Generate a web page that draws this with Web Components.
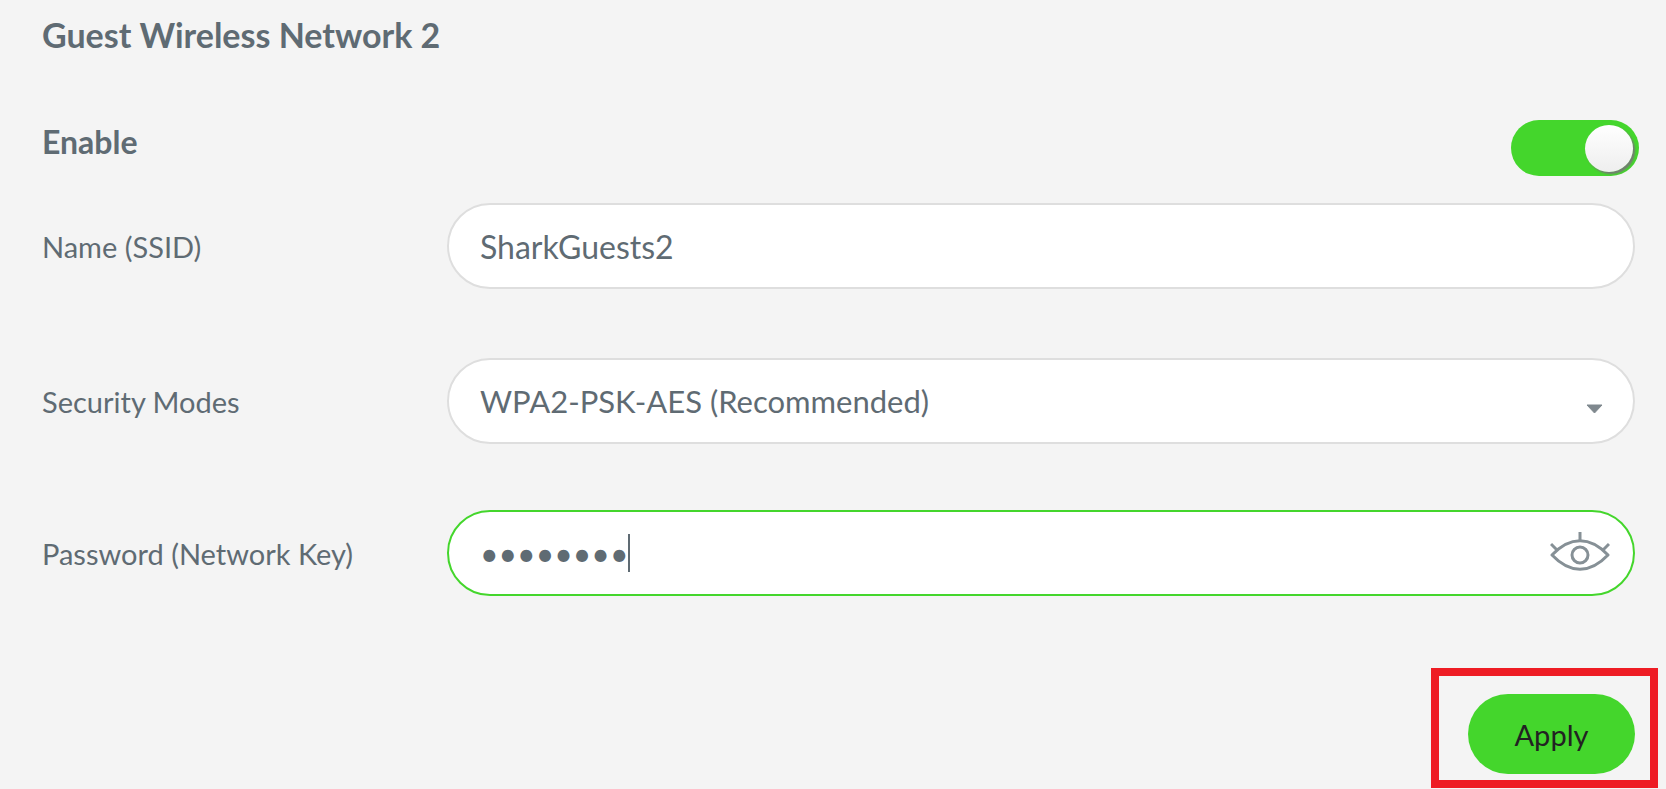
<!DOCTYPE html>
<html lang="en">
<head>
<meta charset="utf-8">
<meta name="viewport" content="width=device-width, initial-scale=1">
<title>Guest Wireless Network 2</title>
<style>
    body {
        margin: 0;
        background: #f4f4f4;
        color: #5f6b73;
        font-family: Lato, "Liberation Sans", sans-serif;
        --accent: #44d62c;
    }
</style>
</head>
<body>
<guest-network heading="Guest Wireless Network 2">
    <toggle-row label="Enable"></toggle-row>
    <text-field label="Name (SSID)" value="SharkGuests2"></text-field>
    <select-field label="Security Modes" value="WPA2-PSK-AES (Recommended)"></select-field>
    <password-field label="Password (Network Key)" value="guest123"></password-field>
    <apply-button slot="action">Apply</apply-button>
</guest-network>

<script>
class GuestNetwork extends HTMLElement {
    constructor() {
        super();
        this._shadowdom = this.attachShadow({ mode: 'open' });
    }

    connectedCallback() {
        this.render();
    }

    render() {
        this._shadowdom.innerHTML = /* html */ `
            <style>
                :host {
                    display: block;
                }
                h2 {
                    margin: 0;
                    padding: 15px 42px 65px;
                    font-size: 34px;
                    line-height: 40px;
                }
                .actions {
                    display: flex;
                    justify-content: flex-end;
                    margin-top: 72px;
                    padding-right: 8px;
                }
            </style>
            <h2>${this.getAttribute('heading')}</h2>
            <slot></slot>
            <div class="actions"><slot name="action"></slot></div>
        `;
    }
}

class ToggleRow extends HTMLElement {
    constructor() {
        super();
        this._shadowdom = this.attachShadow({ mode: 'open' });
    }

    connectedCallback() {
        this.render();
    }

    render() {
        this._shadowdom.innerHTML = /* html */ `
            <style>
                :host {
                    display: flex;
                    justify-content: space-between;
                    align-items: flex-start;
                    padding: 0 27px 0 42px;
                    margin-bottom: 27px;
                }
                label {
                    font-size: 32px;
                    font-weight: bold;
                    line-height: 44px;
                }
                input {
                    appearance: none;
                    display: flex;
                    align-items: center;
                    box-sizing: border-box;
                    width: 128px;
                    height: 56px;
                    margin: 0;
                    padding: 1px 6px 0;
                    border-radius: 28px;
                    background: #c8c8c8;
                    cursor: pointer;
                }
                input::before {
                    content: "";
                    width: 48px;
                    height: 47px;
                    border-radius: 50%;
                    background: linear-gradient(#fff, #eee);
                    box-shadow: 2px 2px 2px #777;
                }
                input:checked {
                    justify-content: flex-end;
                    background: var(--accent);
                }
            </style>
            <label for="toggle">${this.getAttribute('label')}</label>
            <input id="toggle" type="checkbox" checked>
        `;
    }
}

// shared label + rounded box, subclasses give the control
class FormField extends HTMLElement {
    constructor() {
        super();
        this._shadowdom = this.attachShadow({ mode: 'open' });
    }

    connectedCallback() {
        this.render();
    }

    render() {
        this._shadowdom.innerHTML = /* html */ `
            <style>
                :host {
                    display: grid;
                    grid-template-columns: 405px 1fr;
                    align-items: center;
                    padding: 0 31px 0 42px;
                }
                label {
                    font-size: 29px;
                }
                .box {
                    display: flex;
                    align-items: center;
                    box-sizing: border-box;
                    height: 86px;
                    border: 2px solid #dedede;
                    border-radius: 43px;
                    background: #fff;
                    overflow: hidden;
                }
                .box:focus-within {
                    border-color: var(--accent);
                }
                input, select {
                    appearance: none;
                    flex: 1;
                    min-width: 0;
                    height: 100%;
                    margin: 0;
                    padding: 0 31px;
                    border: 0;
                    outline: 0;
                    background: none;
                    color: inherit;
                    font: inherit;
                    font-size: 32px;
                }
                ${this.controlStyle()}
            </style>
            <label for="control">${this.getAttribute('label')}</label>
            <div class="box">${this.control()}</div>
        `;
    }

    controlStyle() {
        return '';
    }
}

class TextField extends FormField {
    controlStyle() {
        return /* css */ `
            :host { margin-bottom: 69px; }
        `;
    }

    control() {
        return /* html */ `<input id="control" type="text" value="${this.getAttribute('value')}">`;
    }
}

class SelectField extends FormField {
    controlStyle() {
        return /* css */ `
            :host { margin-bottom: 66px; }
            .box { display: grid; }
            .box > * { grid-area: 1 / 1; }
            select { font-size: 31px; }
            .arrow {
                justify-self: end;
                margin: 16px 30px 0 0;
                pointer-events: none;
            }
        `;
    }

    control() {
        return /* html */ `
            <select id="control">
                <option>${this.getAttribute('value')}</option>
            </select>
            <svg class="arrow" width="17" height="10" viewBox="0 0 17 10" aria-hidden="true">
                <path d="M1 1h15L8.5 9z" fill="#7f888e" stroke="#7f888e" stroke-linejoin="round"/>
            </svg>
        `;
    }
}

class PasswordField extends FormField {
    connectedCallback() {
        super.connectedCallback();
        const input = this._shadowdom.querySelector('input');
        this._shadowdom.querySelector('button').addEventListener('click', () => {
            input.type = input.type === 'password' ? 'text' : 'password';
        });
        input.focus();
        input.setSelectionRange(input.value.length, input.value.length);
    }

    controlStyle() {
        return /* css */ `
            input {
                flex: none;
                field-sizing: content;
                max-width: 80%;
                padding-right: 0;
                caret-color: transparent;
            }
            /* steady caret right after the dots */
            .caret {
                width: 2px;
                height: 38px;
                background: currentColor;
                visibility: hidden;
            }
            .box:focus-within .caret {
                visibility: visible;
            }
            button {
                display: flex;
                margin: 0 23px 2px auto;
                padding: 0;
                border: 0;
                background: none;
                color: #869096;
                cursor: pointer;
            }
        `;
    }

    control() {
        return /* html */ `
            <input id="control" type="password" value="${this.getAttribute('value')}">
            <span class="caret"></span>
            <button type="button" aria-label="Show password">
                <svg width="60" height="40" viewBox="0 0 60 40" fill="none" stroke="currentColor" stroke-width="3">
                    <path d="M2 23C20 4 40 4 58 23C40 42 20 42 2 23z" stroke-linejoin="round"/>
                    <circle cx="30" cy="23" r="8"/>
                    <path d="M30 0v9M1 12l6 6M59 12l-6 6"/>
                </svg>
            </button>
        `;
    }
}

class ApplyButton extends HTMLElement {
    constructor() {
        super();
        this._shadowdom = this.attachShadow({ mode: 'open' });
    }

    connectedCallback() {
        this.render();
    }

    render() {
        this._shadowdom.innerHTML = /* html */ `
            <style>
                :host {
                    display: block;
                    padding: 18px 15px 6px 29px;
                    border: 8px solid #ee1c24;
                }
                button {
                    display: block;
                    height: 80px;
                    min-width: 167px;
                    padding: 0 40px;
                    border: 0;
                    border-radius: 40px;
                    background: var(--accent);
                    color: #222;
                    font: inherit;
                    font-size: 29px;
                    cursor: pointer;
                }
            </style>
            <button type="button"><slot></slot></button>
        `;
    }
}

customElements.define('guest-network', GuestNetwork);
customElements.define('toggle-row', ToggleRow);
customElements.define('text-field', TextField);
customElements.define('select-field', SelectField);
customElements.define('password-field', PasswordField);
customElements.define('apply-button', ApplyButton);
</script>
</body>
</html>
